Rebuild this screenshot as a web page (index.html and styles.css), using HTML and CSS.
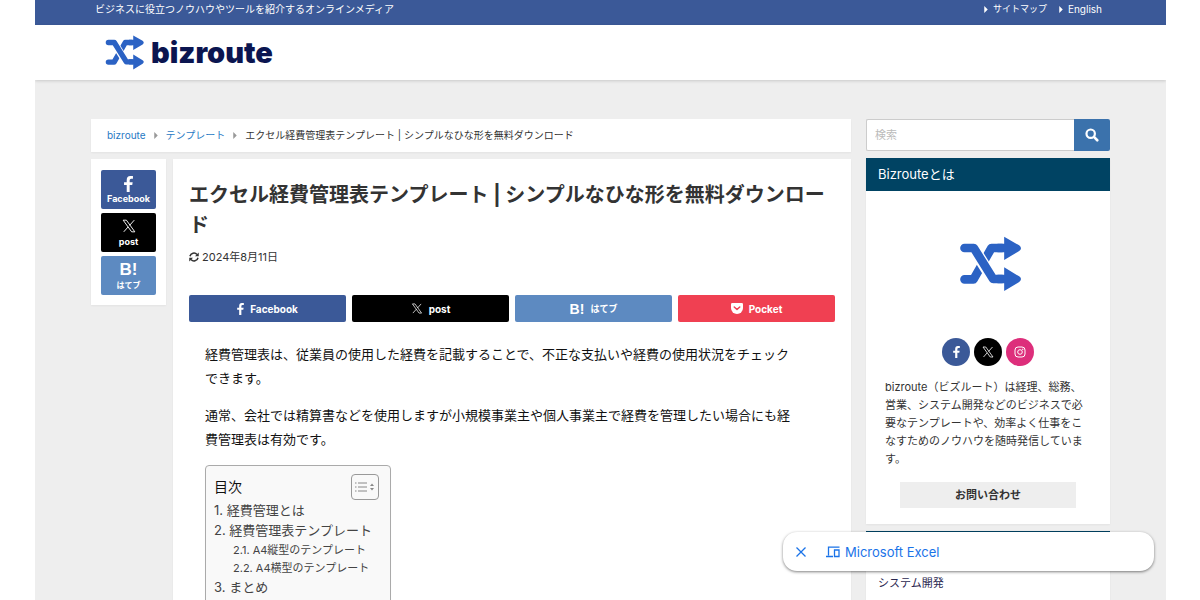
FILE: index.html
```html
<!DOCTYPE html>
<html lang="ja">
<head>
<meta charset="utf-8">
<meta name="viewport" content="width=device-width, initial-scale=1">
<title>エクセル経費管理表テンプレート | bizroute</title>
<link rel="stylesheet" href="styles.css">
</head>
<body>
<svg class="defs" aria-hidden="true">
  <symbol id="i-shuffle" viewBox="300 78 185 168">
    <g fill="none" stroke="#2b62c4" stroke-width="26" stroke-linejoin="round">
      <path stroke-linecap="round" d="M313 208H340L394 114H425"/>
      <path stroke="#fff" stroke-width="36" d="M341 116L397 206"/>
      <path stroke-linecap="round" d="M313 114H341L399 207H425"/>
    </g>
    <g fill="#2b62c4">
      <path d="M412 101H432V80L477 106Q488 115 477 123L432 150V127H412Z"/>
      <path d="M412 194H432V172L477 199Q488 207 477 216L432 243V220H412Z"/>
    </g>
  </symbol>
  <symbol id="i-fb" viewBox="0 0 10 18"><path fill="#fff" d="M3 18V10H0V7H3V4.500Q3 0 7 0H10V3H8Q6.300 3 6.300 4.700V7H9.700L9.200 10H6.300V18Z"/></symbol>
  <symbol id="i-x" viewBox="0 0 24 24"><path fill="none" stroke="#fff" stroke-width="1.600" d="M2 2H7.500L22 22H16.500ZM21 2L13 11M10.500 13.500L3 22"/></symbol>
  <symbol id="i-pocket" viewBox="0 0 24 22"><path fill="#fff" d="M2.500 0H21.500Q24 0 24 2.500V10A12 12 0 0 1 0 10V2.500Q0 0 2.500 0Z"/><path fill="none" stroke="#f04052" stroke-width="3" stroke-linecap="round" stroke-linejoin="round" d="M6.500 8L12 13L17.500 8"/></symbol>
  <symbol id="i-caret" viewBox="0 0 4 8"><path fill="currentColor" d="M0 0L4 4L0 8Z"/></symbol>
</svg>
<div class="page">
  <div class="topbar">
    <p class="tagline">ビジネスに役立つノウハウやツールを紹介するオンラインメディア</p>
    <nav class="topnav" aria-label="サブメニュー">
      <a href="#"><svg class="caret"><use href="#i-caret"/></svg>サイトマップ</a>
      <a class="latin" href="#"><svg class="caret"><use href="#i-caret"/></svg>English</a>
    </nav>
  </div>
  <header class="header">
    <a class="logo" href="#"><svg class="logo-mark" aria-hidden="true"><use href="#i-shuffle"/></svg><span>bizroute</span></a>
  </header>
  <div class="content">
    <main class="main">
      <nav class="card crumbs" aria-label="パンくず">
        <a href="#">bizroute</a><svg class="caret"><use href="#i-caret"/></svg><a href="#">テンプレート</a><svg class="caret"><use href="#i-caret"/></svg><span>エクセル経費管理表テンプレート | シンプルなひな形を無料ダウンロード</span>
      </nav>
      <div class="columns">
        <div class="card side-share">
          <a class="tile fb" href="#"><svg class="tile-fb"><use href="#i-fb"/></svg><span>Facebook</span></a>
          <a class="tile x" href="#"><svg class="tile-x"><use href="#i-x"/></svg><span>post</span></a>
          <a class="tile hatena" href="#"><b>B!</b><span>はてブ</span></a>
        </div>
        <article class="card article">
          <h1>エクセル経費管理表テンプレート | シンプルなひな形を無料ダウンロード</h1>
          <p class="date"><svg viewBox="0 0 20 20" aria-hidden="true"><path fill="none" stroke="#333" stroke-width="3" d="M2 8.500A8 8 0 0 1 16 5M18 11.500A8 8 0 0 1 4 15"/><path fill="#333" d="M19.500 1V8.500H12ZM.500 19V11.500H8Z"/></svg><time datetime="2024-08-11">2024年8月11日</time></p>
          <div class="share-row">
            <a class="share fb" href="#"><svg class="row-fb"><use href="#i-fb"/></svg>Facebook</a>
            <a class="share x" href="#"><svg class="row-x"><use href="#i-x"/></svg>post</a>
            <a class="share hatena" href="#"><b>B!</b><span class="small">はてブ</span></a>
            <a class="share pocket" href="#"><svg class="row-x"><use href="#i-pocket"/></svg>Pocket</a>
          </div>
          <div class="body">
            <p>経費管理表は、従業員の使用した経費を記載することで、不正な支払いや経費の使用状況をチェックできます。</p>
            <p>通常、会社では精算書などを使用しますが小規模事業主や個人事業主で経費を管理したい場合にも経費管理表は有効です。</p>
            <nav class="toc" aria-label="目次">
              <div class="toc-head"><span>目次</span>
                <button type="button" aria-label="目次の表示切り替え"><svg viewBox="0 0 20 12"><path stroke="#888" stroke-width="1" d="M0 2H1.500M3 2H12M0 6H1.500M3 6H12M0 10H1.500M3 10H12"/><path fill="#888" d="M15 5L17 2.500L19 5ZM15 7L17 9.500L19 7Z"/></svg></button>
              </div>
              <ul>
                <li><a href="#">1. 経費管理とは</a></li>
                <li><a href="#">2. 経費管理表テンプレート</a>
                  <ul>
                    <li><a href="#">2.1. A4縦型のテンプレート</a></li>
                    <li><a href="#">2.2. A4横型のテンプレート</a></li>
                  </ul>
                </li>
                <li><a href="#">3. まとめ</a></li>
              </ul>
            </nav>
          </div>
        </article>
      </div>
    </main>
    <aside class="aside">
      <form class="search">
        <input type="search" placeholder="検索" aria-label="検索">
        <button type="submit" aria-label="検索する"><svg viewBox="0 0 16 16"><circle cx="6.500" cy="6.500" r="4.800" fill="none" stroke="#fff" stroke-width="2.500"/><path stroke="#fff" stroke-width="3" stroke-linecap="round" d="M10.500 10.500L14 14"/></svg></button>
      </form>
      <section class="card widget">
        <h2>Bizrouteとは</h2>
        <div class="profile">
          <svg class="profile-mark" role="img" aria-label="bizroute" viewBox="0 0 68 56"><use href="#i-shuffle" x="6" width="62" height="56"/></svg>
          <div class="social">
            <a class="fb" href="#" aria-label="Facebook"><svg class="round-fb"><use href="#i-fb"/></svg></a>
            <a class="x" href="#" aria-label="X"><svg class="round-x"><use href="#i-x"/></svg></a>
            <a class="insta" href="#" aria-label="Instagram"><svg class="round-x" viewBox="0 0 12 12"><g fill="none" stroke="#fff"><rect x="1" y="1" width="10" height="10" rx="3"/><circle cx="6" cy="6" r="2.300"/></g><circle cx="8.800" cy="3.200" r=".700" fill="#fff"/></svg></a>
          </div>
          <p>bizroute（ビズルート）は経理、総務、営業、システム開発などのビジネスで必要なテンプレートや、効率よく仕事をこなすためのノウハウを随時発信しています。</p>
          <a class="contact" href="#">お問い合わせ</a>
        </div>
      </section>
      <section class="card widget">
        <div class="widget-bar"></div>
        <a class="category" href="#">システム開発</a>
      </section>
    </aside>
  </div>
</div>
<div class="float">
  <button type="button" aria-label="閉じる"><svg viewBox="0 0 10 10"><path stroke="#1a73e8" stroke-width="1.300" d="M.500.500L9.500 9.500M9.500.500L.500 9.500"/></svg></button>
  <a href="#"><svg viewBox="0 0 14 12" aria-hidden="true"><path fill="none" stroke="#1a73e8" stroke-width="1.300" d="M13.500 1.200H2.500V9.500M0 10.500H7M8.500 4H13V10.500H8.500Z"/></svg>Microsoft Excel</a>
</div>
</body>
</html>
```

FILE: styles.css
```css
* { box-sizing: border-box; }
body {
  margin: 0;
  background: #fff;
  color: #333;
  font: 11px/18px Inter, "Noto Sans CJK JP", sans-serif;
}
a { color: inherit; text-decoration: none; }
p, h1, h2, ul { margin: 0; padding: 0; }
ul { list-style: none; }
button { border: 0; padding: 0; background: none; cursor: pointer; }
svg { display: block; flex: none; }
.defs { position: absolute; width: 0; height: 0; }

.page {
  display: flex;
  flex-direction: column;
  height: 100vh;
  margin: 0 34px 0 35px;
  overflow: hidden;
  background: #eee;
}
.topbar {
  flex: none;
  display: flex;
  justify-content: space-between;
  padding: 0 64px 7px 60px;
  background: #3b5998;
  color: #fff;
  font-size: 10px;
}
.topnav { display: flex; gap: 12px; font-size: 9px; line-height: 16px; }
.topnav a { display: flex; align-items: center; gap: 5px; }
.topnav .latin { font-size: 10px; }
.caret { width: 4px; height: 7px; }
.header {
  flex: none;
  height: 55px;
  padding: 0 70px;
  display: flex;
  align-items: center;
  background: #fff;
  box-shadow: 0 1px 3px rgba(0, 0, 0, .16);
}
.logo {
  display: flex;
  align-items: center;
  gap: 6px;
  color: #0b1550;
  font-size: 29px;
  line-height: 34px;
  font-weight: 900;
}
.logo-mark { width: 40px; height: 35px; }

.content {
  flex: 1;
  min-height: 0;
  display: grid;
  grid-template-columns: minmax(0, 1fr) 244px;
  align-items: start;
  gap: 15px;
  padding: 39px 56px 0;
}
.card { background: #fff; box-shadow: 0 1px 2px rgba(0, 0, 0, .05); }
.crumbs {
  display: flex;
  align-items: center;
  gap: 8px;
  padding: 7px 16px 8px;
  font-size: 10px;
}
.crumbs a { color: #2779c4; }
.crumbs .caret { color: #999; }
.columns {
  display: grid;
  grid-template-columns: 75px minmax(0, 1fr);
  gap: 7px;
  align-items: start;
  margin-top: 7px;
}
.side-share { display: grid; gap: 4px; padding: 11px 10px 10px; }
.tile {
  height: 39px;
  display: flex;
  flex-direction: column;
  align-items: center;
  justify-content: flex-end;
  padding-bottom: 4px;
  gap: 1px;
  border-radius: 2px;
  color: #fff;
  font-size: 9px;
  line-height: 12px;
  font-weight: 700;
}
.tile b { font: bold 17px/17px "Liberation Sans", sans-serif; }
.tile-fb { width: 9px; height: 16px; }
.tile-x { width: 14px; height: 14px; margin-bottom: 2px; }
.tile.hatena span { font-size: 8px; }
.fb { background: #3b5998; }
.x { background: #000; }
.hatena { background: #5d8ac1; }
.pocket { background: #f04052; }
.insta { background: #dd2e7b; }

.article { padding: 21px 16px 12px; }
h1 { font-size: 20px; line-height: 30px; font-weight: 700; }
.date { display: flex; align-items: center; gap: 3px; margin-top: 8px; }
.date svg { width: 10px; height: 10px; }
.share-row {
  display: grid;
  grid-template-columns: repeat(4, 1fr);
  gap: 6px;
  margin-top: 29px;
}
.share {
  height: 27px;
  display: flex;
  align-items: center;
  justify-content: center;
  gap: 6px;
  border-radius: 2px;
  color: #fff;
  font-size: 10px;
  font-weight: 700;
}
.share b { font: bold 14px/18px "Liberation Sans", sans-serif; }
.share .small { font-size: 9px; }
.row-fb { width: 7px; height: 12px; }
.row-x { width: 12px; height: 11px; }
.body { padding: 20px 36px 0 16px; color: #111; font-size: 13px; line-height: 24px; }
.body p { margin-bottom: 13px; }
.toc {
  width: 186px;
  margin-top: 14px;
  padding: 8px 11px 12px 8px;
  border: 1px solid #aaa;
  border-radius: 4px;
  background: #f9f9f9;
  box-shadow: 0 1px 1px rgba(0, 0, 0, .05);
  color: #444;
  line-height: 20px;
}
.toc-head {
  display: flex;
  align-items: center;
  justify-content: space-between;
  color: #111;
  font-size: 14px;
}
.toc button {
  width: 28px;
  height: 26px;
  display: grid;
  place-items: center;
  border: 1px solid #999;
  border-radius: 4px;
}
.toc button svg { width: 20px; height: 12px; }
.toc li { white-space: nowrap; }
.toc ul ul { padding: 1px 0 0 19px; font-size: 11px; line-height: 18px; }

.aside { display: grid; gap: 7px; align-content: start; }
.search { display: flex; height: 32px; }
.search input {
  flex: 1;
  min-width: 0;
  padding: 0 8px;
  border: 1px solid #ccc;
  border-right: 0;
  border-radius: 2px 0 0 2px;
  background: #fff;
  font: inherit;
}
.search input::placeholder { color: #bbb; }
.search button {
  width: 36px;
  display: grid;
  place-items: center;
  border-radius: 0 2px 2px 0;
  background: #3b72ac;
}
.search svg { width: 14px; height: 14px; }
h2 {
  padding: 7px 12px 8px;
  background: #004363;
  color: #fff;
  font-size: 13px;
  line-height: 18px;
  font-weight: 400;
}
.profile { padding: 45px 19px 16px; }
.profile-mark { width: 68px; height: 56px; margin: 0 auto 46px; }
.social { display: flex; justify-content: center; gap: 4px; margin-bottom: 12px; }
.social a {
  width: 28px;
  height: 28px;
  display: grid;
  place-items: center;
  border-radius: 50%;
}
.round-fb { width: 7px; height: 12px; }
.round-x { width: 12px; height: 12px; }
.contact {
  display: block;
  margin: 14px 15px 0;
  padding: 4px;
  background: #eee;
  text-align: center;
  font-weight: 700;
}
.widget-bar { height: 33px; background: #004363; }
.category { display: block; padding: 10px 12px 16px; color: #2b2850; }

.float {
  position: absolute;
  right: 46px;
  bottom: 29px;
  width: 371px;
  height: 39px;
  display: flex;
  align-items: center;
  gap: 20px;
  padding: 0 13px;
  border-radius: 14px;
  background: #fff;
  box-shadow: 0 1px 3px rgba(0, 0, 0, .5);
  color: #1a73e8;
  font-size: 13px;
}
.float a { display: flex; align-items: center; gap: 5px; }
.float a svg { width: 14px; height: 12px; }
.float button svg { width: 10px; height: 10px; }
```
